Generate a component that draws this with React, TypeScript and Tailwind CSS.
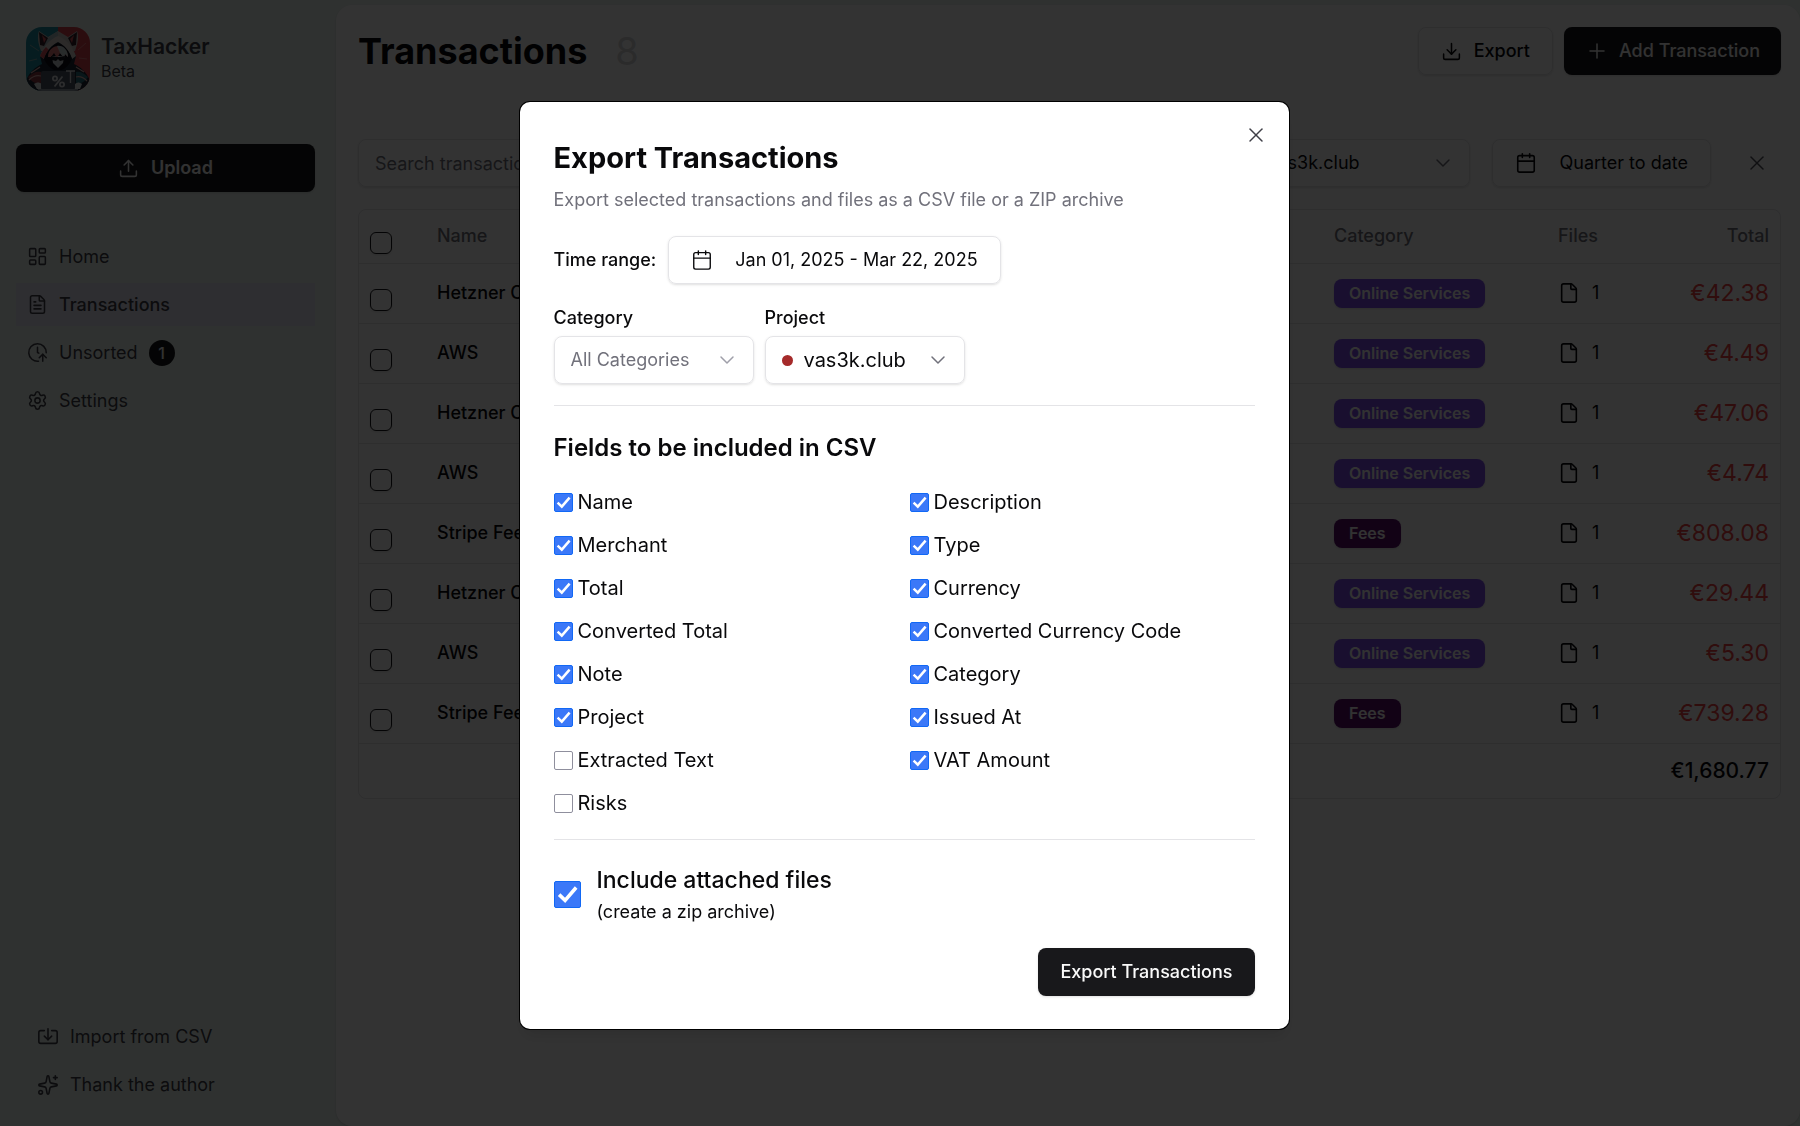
import React from 'react';
import {
    Calendar, ChevronDown, ClockArrowUp, Download, File, FileText, Import, LayoutDashboard, Plus, Settings, Sparkles, Upload, X,
} from 'lucide-react';

interface Transaction {
    id: number;
    name: string;
    category: string;
    files: number;
    total: string;
}

interface ExportField {
    code: string;
    label: string;
    checked: boolean;
}

const transactions: Transaction[] = [
    { id: 1, name: 'Hetzner Cloud', category: 'Online Services', files: 1, total: '€42.38' },
    { id: 2, name: 'AWS', category: 'Online Services', files: 1, total: '€4.49' },
    { id: 3, name: 'Hetzner Cloud', category: 'Online Services', files: 1, total: '€47.06' },
    { id: 4, name: 'AWS', category: 'Online Services', files: 1, total: '€4.74' },
    { id: 5, name: 'Stripe Fees', category: 'Fees', files: 1, total: '€808.08' },
    { id: 6, name: 'Hetzner Cloud', category: 'Online Services', files: 1, total: '€29.44' },
    { id: 7, name: 'AWS', category: 'Online Services', files: 1, total: '€5.30' },
    { id: 8, name: 'Stripe Fees', category: 'Fees', files: 1, total: '€739.28' },
];

const exportFields: ExportField[] = [
    { code: 'name', label: 'Name', checked: true },
    { code: 'description', label: 'Description', checked: true },
    { code: 'merchant', label: 'Merchant', checked: true },
    { code: 'type', label: 'Type', checked: true },
    { code: 'total', label: 'Total', checked: true },
    { code: 'currency', label: 'Currency', checked: true },
    { code: 'convertedTotal', label: 'Converted Total', checked: true },
    { code: 'convertedCurrencyCode', label: 'Converted Currency Code', checked: true },
    { code: 'note', label: 'Note', checked: true },
    { code: 'category', label: 'Category', checked: true },
    { code: 'project', label: 'Project', checked: true },
    { code: 'issuedAt', label: 'Issued At', checked: true },
    { code: 'text', label: 'Extracted Text', checked: false },
    { code: 'vat', label: 'VAT Amount', checked: true },
    { code: 'risks', label: 'Risks', checked: false },
];

const categoryColors: Record<string, string> = {
    'Online Services': 'bg-[#7c4dec]',
    'Fees': 'bg-[#5b0d6b]',
};

const Logo: React.FC = () => (
    <svg viewBox="0 0 64 64" className="size-16 rounded-2xl" aria-hidden="true">
        <rect width="32" height="64" fill="#1f8ea0" />
        <rect x="32" width="32" height="64" fill="#d8404c" />
        <path d="M4 18l9 6M3 34l8-2M60 16l-8 7M61 32l-8-1" stroke="#e9b9ae" strokeWidth="1" opacity=".5" />
        {/* hood with ears */}
        <path d="M15 24C12 16 11 9 13 4l9 6 10-6 10 6 9-6c2 5 1 12-2 20z" fill="#c9c4bd" />
        <path d="M32 4l-9 6-6 10 3 3 12-12z" fill="#a3b9bd" />
        <path d="M14 18l-1-13 9 6-4 8z" fill="#33202c" />
        <path d="M50 18l1-13-9 6 4 8z" fill="#33202c" />
        <path d="M16 8l4 4-2 4z" fill="#d14f56" />
        <path d="M48 8l-4 4 2 4z" fill="#d14f56" />
        {/* shoulders */}
        <path d="M0 53c4-8 9-13 16-16l-2-8c3-7 9-14 18-17 9 3 15 10 18 17l-2 8c7 3 12 8 16 16v11H0z" fill="#1b2635" />
        <path d="M32 9c-8 3-15 11-18 20l4 3c3-9 8-14 14-17 6 3 11 8 14 17l4-3C47 20 40 12 32 9z" fill="#d9d2cb" />
        <path d="M20 20c-3 3-5 6-6 9l4 3c1-4 3-7 5-9z" fill="#d8535a" />
        <path d="M32 16c-7 3-12 9-14 16 2 5 6 9 10 11h8c4-2 8-6 10-11-2-7-7-13-14-16z" fill="#0d0e17" />
        {/* face and hair */}
        <path d="M26 29h12l-1 7-5 5-5-5z" fill="#c9cdd0" />
        <path d="M22 30c0-7 5-11 10-11s10 4 10 11l-3-3-1 4-4-5-3 5-3-5-3 4z" fill="#e27a7a" />
        <path d="M31 19c6-1 11 4 11 11l-3-3-1 4-4-5z" fill="#c9d4d8" />
        <path d="M25 29l6 1h2l6-1-1 4-4 1-2-2-2 2-4-1z" fill="#12131b" />
        {/* sleeves */}
        <path d="M2 50c5-5 9-6 13-5v12c-5 0-9-2-13-7z" fill="#8c3843" />
        <path d="M62 50c-5-5-9-6-12-5v12c5 0 8-2 12-7z" fill="#28707d" />
        <path d="M3 53c4-4 8-5 12-4M61 54c-4-4-7-5-11-4M5 46l9-6M58 45l-8-5" stroke="#d9a9a5" strokeWidth="1.2" fill="none" />
        <path d="M8 57c3-2 5-2 8 0l1 5h-6zM56 57c-3-2-5-2-7 0l-1 5h6z" fill="#dfe3e5" />
        {/* laptop */}
        <rect x="15" y="44" width="34" height="19" rx="2" fill="#4b5563" />
        <rect x="12" y="62" width="40" height="2" fill="#8f9ba3" />
        <g fill="none" stroke="#d9dde0" strokeWidth="1.8">
            <circle cx="29" cy="51.5" r="2.1" />
            <circle cx="36" cy="57.5" r="2.1" />
            <path d="M36.500 49.500l-8 10" />
            <path d="M40 44h9M44.500 44v12" strokeWidth="1.4" />
        </g>
    </svg>
);

const CheckGlyph: React.FC = () => (
    <svg viewBox="0 0 19 19" fill="none" className="pointer-events-none col-start-1 row-start-1 hidden size-full peer-checked:block" aria-hidden="true">
        <path d="M3.600 9.600l4.200 4L15.600 4.600" stroke="white" strokeWidth="2.500" />
    </svg>
);

const FieldCheckbox: React.FC<{ field: ExportField }> = ({ field }) => (
    <label className="flex items-center gap-[5px] text-xl leading-7">
        <span className="grid size-[19px] shrink-0">
            <input
                type="checkbox"
                name={field.code}
                defaultChecked={field.checked}
                className="peer col-start-1 row-start-1 size-full appearance-none rounded-xs border border-[#8f8f9d] bg-white checked:border-[#1168f5] checked:bg-[#3b78f8]"
            />
            <CheckGlyph />
        </span>
        {field.label}
    </label>
);

const RowCheckbox: React.FC<{ label: string }> = ({ label }) => (
    <input type="checkbox" aria-label={label} className="mt-[14px] block size-[22px] appearance-none rounded-[6px] border border-zinc-900 shadow-sm" />
);

const Sidebar: React.FC = () => (
    <aside className="flex w-[336px] shrink-0 flex-col px-4 pt-[27px] pb-5 text-zinc-700">
        <a href="#" className="flex items-center gap-[11px] pl-[10px]">
            <Logo />
            <div>
                <div className="text-[21px] leading-6 font-semibold">TaxHacker</div>
                <div className="text-base leading-6">Beta</div>
            </div>
        </a>

        <button className="mt-[53px] mr-[5px] flex h-12 items-center justify-center gap-3 rounded-lg bg-zinc-900 text-lg font-semibold text-zinc-50 shadow-sm">
            <Upload size={21} strokeWidth={1.75} />
            Upload
        </button>

        <nav className="mt-[43px] mr-[5px] flex flex-col gap-[5px] text-lg leading-6">
            <a href="#" className="flex h-[43px] items-center gap-[11px] px-[11px]">
                <LayoutDashboard size={21} strokeWidth={1.75} />
                Home
            </a>
            <a href="#" className="flex h-[43px] items-center gap-[11px] bg-[#e6e6f5] px-[11px] font-medium">
                <FileText size={21} strokeWidth={1.75} />
                Transactions
            </a>
            <a href="#" className="flex h-[43px] items-center gap-[11px] px-[11px]">
                <ClockArrowUp size={21} strokeWidth={1.75} />
                Unsorted
                <span className="flex size-[26px] items-center justify-center rounded-full bg-zinc-900 text-base font-medium text-zinc-50">1</span>
            </a>
            <a href="#" className="flex h-[43px] items-center gap-[11px] px-[11px]">
                <Settings size={21} strokeWidth={1.75} />
                Settings
            </a>
        </nav>

        <div className="mt-auto flex flex-col gap-[5px] pl-[21px] text-lg leading-6">
            <a href="#" className="flex h-[43px] items-center gap-[11px]">
                <Import size={22} strokeWidth={1.75} />
                Import from CSV
            </a>
            <a href="#" className="flex h-[43px] items-center gap-[11px]">
                <Sparkles size={22} strokeWidth={1.75} />
                Thank the author
            </a>
        </div>
    </aside>
);

const TransactionsTable: React.FC = () => (
    <div className="mt-[22px] overflow-hidden rounded-lg border border-zinc-200">
        <table className="w-full table-fixed text-left">
            <thead>
                <tr className="h-[53px] text-lg text-zinc-500">
                    <th className="w-[68px] pl-[11px] font-medium"><RowCheckbox label="Select all" /></th>
                    <th className="pl-[10px] font-medium">Name</th>
                    <th className="w-[224px] font-medium">Category</th>
                    <th className="w-[110px] font-medium">Files</th>
                    <th className="w-[112px] pr-[11px] text-right font-medium">Total</th>
                </tr>
            </thead>
            <tbody>
                {transactions.map((transaction) => (
                    <tr key={transaction.id} className="h-[60px] border-t border-zinc-200">
                        <td className="pl-[11px]"><RowCheckbox label={`Select ${transaction.name}`} /></td>
                        <td className="pl-[10px] text-lg font-medium">{transaction.name}</td>
                        <td>
                            <span className={`inline-flex h-[29px] items-center rounded-lg px-[15px] text-base font-semibold text-zinc-50 shadow-sm ${categoryColors[transaction.category]}`}>
                                {transaction.category}
                            </span>
                        </td>
                        <td>
                            <div className="flex items-center gap-3 text-lg">
                                <File size={22} strokeWidth={1.75} />
                                {transaction.files}
                            </div>
                        </td>
                        <td className="pr-[11px] text-right text-[23px] text-[#ef4444]">{transaction.total}</td>
                    </tr>
                ))}
            </tbody>
            <tfoot>
                <tr className="h-[55px] border-t border-zinc-200">
                    <td colSpan={5} className="pr-[11px] text-right text-[21px] font-medium">€1,680.77</td>
                </tr>
            </tfoot>
        </table>
    </div>
);

const ExportDialog: React.FC = () => (
    <div role="dialog" aria-modal="true" aria-labelledby="export-title" className="relative w-full max-w-[769px] rounded-[10px] bg-white px-[34px] pt-9 pb-[33px] text-zinc-950 shadow-lg ring-1 ring-black">
        <button aria-label="Close" className="absolute top-[21px] right-[21px] text-zinc-700">
            <X size={24} strokeWidth={1.5} />
        </button>

        <h2 id="export-title" className="text-[29px] leading-10 font-bold">Export Transactions</h2>
        <p className="mt-2 text-lg leading-7 text-zinc-500">Export selected transactions and files as a CSV file or a ZIP archive</p>

        <div className="mt-[22px] flex items-center gap-3 text-lg">
            <span className="font-medium">Time range:</span>
            <button className="flex h-12 items-center gap-[22px] rounded-lg border border-zinc-200 px-[22px] shadow-sm">
                <Calendar size={22} strokeWidth={1.5} />
                Jan 01, 2025 - Mar 22, 2025
            </button>
        </div>

        <div className="mt-[22px] flex gap-[11px]">
            <div className="flex w-[200px] flex-col gap-[6px]">
                <label htmlFor="export-category" className="text-lg leading-6 font-medium">Category</label>
                <div className="grid items-center">
                    <select id="export-category" className="col-start-1 row-start-1 h-12 appearance-none rounded-lg border border-zinc-200 px-4 text-lg text-zinc-500 shadow-sm">
                        <option>All Categories</option>
                    </select>
                    <ChevronDown size={24} strokeWidth={1.5} className="pointer-events-none col-start-1 row-start-1 mr-[15px] justify-self-end text-zinc-400" />
                </div>
            </div>
            <div className="flex w-[200px] flex-col gap-[6px]">
                <label htmlFor="export-project" className="text-lg leading-6 font-medium">Project</label>
                <div className="grid items-center">
                    <select id="export-project" className="col-start-1 row-start-1 h-12 appearance-none rounded-lg border border-zinc-200 pl-[38px] text-xl shadow-sm">
                        <option>vas3k.club</option>
                    </select>
                    <span className="pointer-events-none col-start-1 row-start-1 ml-[17px] size-[11px] rounded-full bg-[#a52a2a]" />
                    <ChevronDown size={24} strokeWidth={1.5} className="pointer-events-none col-start-1 row-start-1 mr-[15px] justify-self-end text-zinc-500" />
                </div>
            </div>
        </div>

        <hr className="mt-[21px] border-zinc-200" />

        <h3 className="mt-6 text-2xl leading-9 font-semibold">Fields to be included in CSV</h3>
        <div className="mt-[22px] grid grid-cols-2 gap-x-[11px] gap-y-[15px]">
            {exportFields.map((field) => (
                <FieldCheckbox key={field.code} field={field} />
            ))}
        </div>

        <hr className="mt-[22px] border-zinc-200" />

        <label className="mt-[22px] flex items-center gap-4">
            <span className="grid size-[27px] shrink-0">
                <input
                    type="checkbox"
                    name="includeAttachments"
                    defaultChecked
                    className="peer col-start-1 row-start-1 size-full appearance-none rounded-xs border border-[#8f8f9d] bg-white checked:border-[#1168f5] checked:bg-[#3b78f8]"
                />
                <CheckGlyph />
            </span>
            <span className="flex flex-col">
                <span className="text-[23px] leading-9 font-medium">Include attached files</span>
                <span className="text-lg leading-7">(create a zip archive)</span>
            </span>
        </label>

        <div className="mt-[22px] flex justify-end">
            <button className="h-12 rounded-lg bg-zinc-900 px-[22px] text-lg font-medium text-zinc-50 shadow-sm">Export Transactions</button>
        </div>
    </div>
);

const App: React.FC = () => {
    return (
        <div className="min-h-screen bg-[#ebf4f0] font-['Inter',sans-serif] text-zinc-950">
            <div className="flex min-h-screen">
                <Sidebar />
                <main className="mt-[5px] flex-1 rounded-2xl bg-white pt-[22px] pr-[19px] pl-[22px] shadow-sm">
                    <header className="flex items-center justify-between">
                        <h1 className="flex items-center gap-7 text-4xl leading-12 font-bold">
                            Transactions
                            <span className="text-[38px] font-normal text-zinc-300">8</span>
                        </h1>
                        <div className="flex gap-[11px]">
                            <button className="flex h-12 items-center gap-3 rounded-lg border border-zinc-200 px-[22px] text-lg font-medium shadow-sm">
                                <Download size={21} strokeWidth={1.75} />
                                Export
                            </button>
                            <button className="flex h-12 items-center gap-[10px] rounded-lg bg-zinc-900 px-[21px] text-lg font-medium text-zinc-50 shadow-sm">
                                <Plus size={24} strokeWidth={1.5} />
                                Add Transaction
                            </button>
                        </div>
                    </header>

                    <div className="mt-16 flex items-center gap-[22px]">
                        <input aria-label="Search transactions" placeholder="Search transactions..." className="h-12 min-w-0 flex-1 rounded-lg border border-zinc-200 px-4 text-lg shadow-sm placeholder:text-zinc-500" />
                        <div className="grid w-[230px] items-center">
                            <select aria-label="Project" className="col-start-1 row-start-1 h-12 appearance-none rounded-lg border border-zinc-200 pl-[26px] text-lg shadow-sm">
                                <option>vas3k.club</option>
                            </select>
                            <ChevronDown size={24} strokeWidth={1.5} className="pointer-events-none col-start-1 row-start-1 mr-[15px] justify-self-end text-zinc-500" />
                        </div>
                        <button className="flex h-12 items-center gap-[22px] rounded-lg border border-zinc-200 px-[22px] text-lg shadow-sm">
                            <Calendar size={22} strokeWidth={1.75} />
                            Quarter to date
                        </button>
                        <button aria-label="Clear filters" className="flex size-12 items-center justify-center text-zinc-600">
                            <X size={24} strokeWidth={1.5} />
                        </button>
                    </div>

                    <TransactionsTable />
                </main>
            </div>

            <div className="fixed inset-0 flex items-center justify-center bg-black/80 pt-[5px] pl-2">
                <ExportDialog />
            </div>
        </div>
    );
};

export default App;
